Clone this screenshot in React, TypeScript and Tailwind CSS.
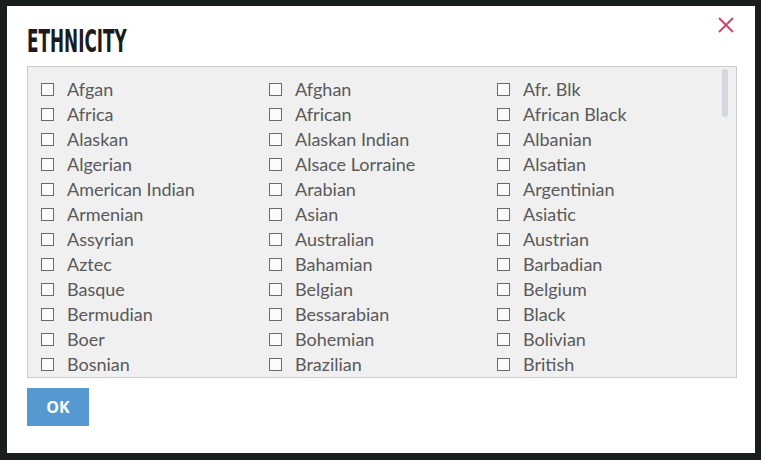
import { useState } from "react";

const ITEMS = [
  "Afgan", "Afghan", "Afr. Blk",
  "Africa", "African", "African Black",
  "Alaskan", "Alaskan Indian", "Albanian",
  "Algerian", "Alsace Lorraine", "Alsatian",
  "American Indian", "Arabian", "Argentinian",
  "Armenian", "Asian", "Asiatic",
  "Assyrian", "Australian", "Austrian",
  "Aztec", "Bahamian", "Barbadian",
  "Basque", "Belgian", "Belgium",
  "Bermudian", "Bessarabian", "Black",
  "Boer", "Bohemian", "Bolivian",
  "Bosnian", "Brazilian", "British",
  "Bulgarian", "Burmese", "Cambodian",
  "Canadian", "Caribbean", "Caucasian",
];

export default function App() {
  const [checked, setChecked] = useState<Record<string, boolean>>({});

  return (
    <div className="h-[460px] w-[761px] bg-[#1b1e1f] pl-[7px] pt-[6px]">
      <div className="relative h-[447px] w-[748px] bg-white px-[20px]">
        <button className="absolute right-[19px] top-[9px] text-[#d6405f]">
          <svg width="20" height="20" viewBox="0 0 20 20" fill="none" stroke="currentColor" strokeWidth="1.8">
            <path d="M3 3 L17 17 M17 3 L3 17" />
          </svg>
        </button>

        <h2
          className="pt-[19px] h-[60px] text-[32px] leading-[32px] font-bold text-[#1c1c1c] origin-left scale-x-[0.585]"
          style={{ fontFamily: '"Liberation Sans Narrow", "DejaVu Sans Condensed", "Liberation Sans", sans-serif' }}
        >
          ETHNICITY
        </h2>

        <div className="relative h-[312px] w-[710px] overflow-hidden border border-[#cccccc] bg-[#f0f0f0]">
          <div
            className="grid grid-cols-[228px_228px_1fr] pl-[13px] pt-[10px] text-[18px] text-[#595959]"
            style={{ fontFamily: 'Lato, "Open Sans", sans-serif' }}
          >
            {ITEMS.map((name) => (
              <label key={name} className="flex h-[25px] items-center gap-[13px] cursor-pointer">
                <span
                  onClick={() => setChecked((c) => ({ ...c, [name]: !c[name] }))}
                  className={
                    "h-[13px] w-[13px] shrink-0 border border-[#6b6b6b] " + (checked[name] ? "bg-[#555]" : "bg-[#fbfbfb]")
                  }
                />
                <span>{name}</span>
              </label>
            ))}
          </div>
          <div className="absolute right-[8px] top-[2px] h-[48px] w-[6px] rounded-full bg-[#d4d8dc]" />
        </div>

        <button
          className="mt-[10px] h-[38px] w-[62px] bg-[#5599d0] text-[16px] font-bold text-white"
          style={{ fontFamily: '"Open Sans", sans-serif' }}
        >
          OK
        </button>
      </div>
    </div>
  );
}
